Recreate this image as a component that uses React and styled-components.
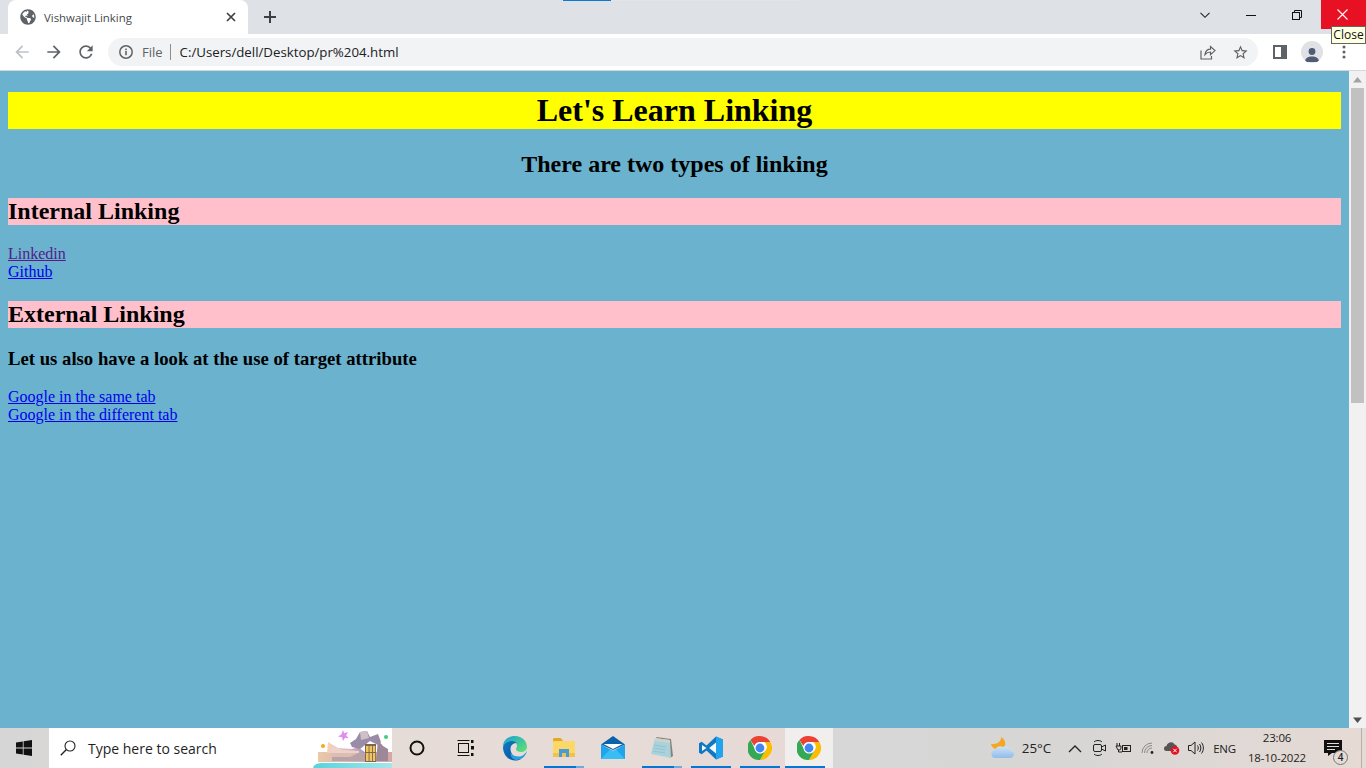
import styled, { createGlobalStyle } from 'styled-components';
import { FaGlobeAmericas } from 'react-icons/fa';

const GlobalStyle = createGlobalStyle`
  html, body {
    margin: 0;
    padding: 0;
    height: 100%;
    overflow: hidden;
  }
`;

const uiFont = `'Open Sans', 'Noto Sans', sans-serif`;

const Screen = styled.div`
  position: relative;
  display: flex;
  flex-direction: column;
  width: 1366px;
  height: 768px;
  overflow: hidden;
  font-family: ${uiFont};
`;

/* ---- browser frame ---- */

const TabStrip = styled.div`
  display: flex;
  align-items: flex-start;
  height: 34px;
  background: #dee1e6;
`;

const Tab = styled.div`
  display: flex;
  align-items: center;
  width: 240px;
  height: 34px;
  margin-left: 8px;
  padding: 0 12px;
  box-sizing: border-box;
  background: #fff;
  border-radius: 8px 8px 0 0;
  color: #5f6368;
`;

const TabTitle = styled.span`
  flex: 1;
  margin-left: 8px;
  font-size: 11.4px;
  color: #45494e;
`;

const PlusButton = styled.div`
  display: flex;
  align-items: center;
  justify-content: center;
  width: 28px;
  height: 34px;
  margin-left: 8px;
`;

const TabSearch = styled.div`
  display: flex;
  align-items: center;
  justify-content: center;
  width: 28px;
  height: 29px;
  margin-left: auto;
  margin-right: 10px;
`;

const WindowButton = styled.div`
  display: flex;
  align-items: center;
  justify-content: center;
  width: ${(p) => p.$w || 46}px;
  height: 29px;
  padding-right: 2px;
  box-sizing: border-box;
  background: ${(p) => (p.$danger ? '#e81123' : 'transparent')};
`;

const Toolbar = styled.div`
  display: flex;
  align-items: center;
  height: 36px;
  background: #fff;
  border-bottom: 1px solid #d5d7da;
  box-sizing: content-box;
`;

const NavButton = styled.div`
  display: flex;
  align-items: center;
  justify-content: center;
  flex: none;
  width: 32px;
  height: 32px;
  margin-left: ${(p) => p.$ml || 0}px;
  color: ${(p) => p.$color || '#5f6368'};
`;

const Omnibox = styled.div`
  display: flex;
  align-items: center;
  width: 1150px;
  height: 28px;
  margin-left: 6px;
  padding: 0 2px 0 10px;
  box-sizing: border-box;
  background: #f1f3f4;
  border-radius: 14px;
`;

const FileLabel = styled.span`
  margin-left: 8px;
  padding-right: 7px;
  border-right: 1px solid #8a8d91;
  font-size: 13px;
  line-height: 16px;
  color: #5f6368;
`;

const Url = styled.span`
  flex: 1;
  margin-left: 9px;
  font-size: 13.25px;
  color: #202124;
`;

const OmniIcon = styled.div`
  display: flex;
  align-items: center;
  justify-content: center;
  width: 32px;
  height: 28px;
`;

const Avatar = styled.div`
  display: flex;
  align-items: flex-end;
  justify-content: center;
  width: 22px;
  height: 22px;
  border-radius: 50%;
  background: #dfe1e5;
  overflow: hidden;
`;

const Tooltip = styled.div`
  position: absolute;
  top: 26px;
  left: 1331px;
  width: 35px;
  height: 18px;
  box-sizing: border-box;
  background: #ffffe1;
  border: 1px solid #646464;
  font-size: 12px;
  line-height: 16px;
  text-align: center;
  color: #111;
`;

const EdgeSliver = styled.div`
  position: absolute;
  top: 0;
  left: 563px;
  display: flex;
  height: 1px;

  &::before {
    content: '';
    width: 48px;
    background: #0a7ad9;
  }

  &::after {
    content: '';
    width: 192px;
    background: #e4e4e4;
  }
`;

/* ---- the page itself ---- */

const Viewport = styled.div`
  display: flex;
  flex: 1;
  min-height: 0;
`;

const Page = styled.main`
  flex: 1;
  padding: 0 8px;
  overflow: hidden;
  background: #6bb2ce;
  font-family: 'Liberation Serif', 'Times New Roman', serif;
  font-size: 16px;
  color: #000;
`;

const Title = styled.h1`
  margin: 21.44px 0;
  font-size: 32px;
  text-align: center;
  background: yellow;
`;

const Subtitle = styled.h2`
  margin: 19.92px 0;
  font-size: 24px;
  text-align: center;
`;

const Section = styled.h2`
  margin: 19.92px 0;
  font-size: 24px;
  background: pink;
`;

const Note = styled.h3`
  margin: 18.72px 0;
  font-size: 18.72px;
`;

const PageLink = styled.a`
  color: ${(p) => (p.$visited ? '#551a8b' : '#0000ee')};
  text-decoration: underline;
`;

const Scrollbar = styled.div`
  display: flex;
  flex-direction: column;
  align-items: center;
  width: 17px;
  background: #f1f1f1;
`;

const ScrollArrow = styled.div`
  display: flex;
  align-items: center;
  justify-content: center;
  width: 17px;
  height: 17px;
`;

const ScrollThumb = styled.div`
  width: 13px;
  height: 315px;
  background: #c1c1c1;
`;

const ScrollTrack = styled.div`
  flex: 1;
`;

/* ---- windows taskbar ---- */

const Taskbar = styled.footer`
  display: flex;
  align-items: stretch;
  height: 40px;
  background: linear-gradient(90deg, #d6d6d6 0, #e6dcd7 28%, #e7dad6 60%, #d7d7d7 61%, #d7d6d5 78%, #e6dad4 100%);
`;

const StartButton = styled.div`
  display: flex;
  align-items: center;
  justify-content: center;
  width: 49px;
  padding-right: 1px;
  box-sizing: border-box;
`;

const SearchBox = styled.div`
  display: flex;
  align-items: center;
  width: 343px;
  padding-left: 11px;
  box-sizing: border-box;
  background: #fff;
`;

const SearchText = styled.span`
  margin-left: 12px;
  font-size: 14px;
  color: #1f1f1f;
`;

const SearchArt = styled.div`
  display: flex;
  align-self: flex-end;
  margin-left: auto;
`;

const TaskItem = styled.div`
  position: relative;
  display: flex;
  align-items: center;
  justify-content: center;
  width: ${(p) => (p.$active ? 48 : 49)}px;
  margin-left: ${(p) => (p.$active ? 1 : 0)}px;
  background: ${(p) => (p.$active ? '#f1efee' : 'transparent')};

  &::after {
    content: '';
    display: ${(p) => (p.$running ? 'block' : 'none')};
    position: absolute;
    left: ${(p) => (p.$active ? 0 : 5)}px;
    bottom: 0;
    width: 40px;
    height: 2px;
    background: ${(p) =>
      p.$stacked
        ? 'linear-gradient(90deg, #0078d7 0, #0078d7 80%, #6aaee0 80%)'
        : '#0078d7'};
  }
`;

const Tray = styled.div`
  display: flex;
  align-items: stretch;
  margin-left: auto;
`;

const TrayCell = styled.div`
  display: flex;
  align-items: center;
  justify-content: center;
  width: ${(p) => p.$w}px;
  box-sizing: border-box;
  font-size: 12px;
  color: #222;
`;

const Temperature = styled(TrayCell)`
  padding-right: 4px;
  font-size: 13.4px;
`;

const Language = styled(TrayCell)`
  font-size: 11.5px;
  letter-spacing: -0.3px;
`;

const Clock = styled.div`
  display: flex;
  flex-direction: column;
  align-items: center;
  justify-content: center;
  width: 72px;
  font-size: 11.5px;
  line-height: 20px;
  letter-spacing: -0.2px;
  color: #222;
`;

const NotifyCell = styled.div`
  position: relative;
  display: flex;
  align-items: center;
  justify-content: center;
  width: 48px;
  padding-right: 8px;
  box-sizing: border-box;
`;

const NotifyBadge = styled.span`
  position: absolute;
  top: 22px;
  left: 20px;
  width: 13px;
  height: 13px;
  border: 1px solid #777;
  border-radius: 50%;
  background: #e6dcd6;
  font-size: 10px;
  font-weight: 600;
  line-height: 13px;
  text-align: center;
  color: #222;
`;

const DesktopPeek = styled.div`
  width: 5px;
  box-sizing: border-box;
  border-left: 1px solid #b5b0ad;
`;

/* ---- drawn icons ---- */

function Arrow({ flip }) {
  return (
    <svg width="20" height="20" viewBox="0 0 24 24" fill="currentColor" style={flip ? { transform: 'scaleX(-1)' } : undefined}>
      <path d="M20 11H7.83l5.59-5.59L12 4l-8 8 8 8 1.41-1.41L7.83 13H20v-2z" />
    </svg>
  );
}

function Reload() {
  return (
    <svg width="20" height="20" viewBox="0 0 24 24" fill="#5f6368">
      <path d="M17.65 6.35C16.2 4.9 14.21 4 12 4c-4.42 0-7.99 3.58-7.99 8s3.57 8 7.99 8c3.73 0 6.84-2.55 7.73-6h-2.08c-.82 2.33-3.04 4-5.65 4-3.31 0-6-2.69-6-6s2.69-6 6-6c1.66 0 3.14.69 4.22 1.78L13 11h7V4l-2.35 2.35z" />
    </svg>
  );
}

function InfoIcon() {
  return (
    <svg width="16" height="16" viewBox="0 0 16 16" fill="none">
      <circle cx="8" cy="8" r="6.2" stroke="#5f6368" strokeWidth="1.5" />
      <rect x="7.2" y="7" width="1.6" height="4.2" fill="#5f6368" />
      <rect x="7.2" y="4.6" width="1.6" height="1.6" fill="#5f6368" />
    </svg>
  );
}

function ShareIcon() {
  return (
    <svg width="16" height="16" viewBox="0 0 16 16" fill="none" stroke="#5f6368" strokeWidth="1.2">
      <path d="M1 6.5v8.5h10.5v-3" />
      <path d="M5 10.5C5.5 7 8 5.2 10.5 5.2V2.6L15 6.6l-4.5 4V8C8.5 8 6.5 8.8 5 10.5z" />
    </svg>
  );
}

function StarIcon() {
  return (
    <svg width="17" height="17" viewBox="0 0 24 24" fill="#5f6368">
      <path d="M22 9.24l-7.19-.62L12 2 9.19 8.63 2 9.24l5.46 4.73L5.82 21 12 17.27 18.18 21l-1.63-7.03L22 9.24zM12 15.4l-3.76 2.27 1-4.28-3.32-2.88 4.38-.38L12 6.1l1.71 4.04 4.38.38-3.32 2.88 1 4.28L12 15.4z" />
    </svg>
  );
}

function SidePanelIcon() {
  return (
    <svg width="14" height="14" viewBox="0 0 14 14">
      <path fillRule="evenodd" fill="#5f6368" d="M0 0h14v14H0zM2 2v10h6V2z" />
    </svg>
  );
}

function WindowsLogo() {
  return (
    <svg width="16" height="16" viewBox="0 0 16 16" fill="#111">
      <path d="M0 2.4l6.8-1v6.2H0zM7.6 1.3L16 0v7.6H7.6zM0 8.4h6.8v6.2L0 13.6zM7.6 8.4H16V16l-8.4-1.2z" />
    </svg>
  );
}

function SearchGlass() {
  return (
    <svg width="16" height="16" viewBox="0 0 16 16" fill="none" stroke="#222" strokeWidth="1.1">
      <circle cx="10" cy="6" r="5" />
      <path d="M6.4 9.6L.8 15.2" strokeWidth="1.4" />
    </svg>
  );
}

function BuildingArt() {
  return (
    <svg width="80" height="40" viewBox="0 0 80 40">
      <defs>
        <linearGradient id="artWing" x1="0" y1="0" x2="1" y2="0">
          <stop offset="0" stopColor="#f6d3b4" />
          <stop offset="0.5" stopColor="#e2b8c4" />
          <stop offset="1" stopColor="#a795b8" />
        </linearGradient>
        <linearGradient id="artBase" x1="0" y1="0" x2="1" y2="0">
          <stop offset="0" stopColor="#eac8a8" />
          <stop offset="0.6" stopColor="#d3aeb2" />
          <stop offset="1" stopColor="#d6a6a6" />
        </linearGradient>
        <linearGradient id="artWater" x1="0" y1="0" x2="1" y2="0">
          <stop offset="0" stopColor="#55d5dc" />
          <stop offset="1" stopColor="#a4e6ea" />
        </linearGradient>
      </defs>
      <path d="M1 40c1-4 5-5 10-5h69v5z" fill="url(#artWater)" />
      <rect x="6" y="24" width="74" height="10" fill="url(#artBase)" />
      <path d="M15 25l1-11 10 6 14 1 6-2 8 6z" fill="url(#artWing)" />
      <path d="M19 25V18l12 4 16 1v2z" fill="#ecd2c8" />
      <path d="M20 25h32l4 8H20z" fill="#b8a3a6" />
      <path d="M20 25h26l-8 4H20z" fill="#dcbdb4" />
      <path d="M38 15l6-4 4-7 7-1 3 6 8-3 3 8-3 3-8-4-10 8-8-2z" fill="#9a8ba6" />
      <path d="M48 4l7-1 2 7-8 2z" fill="#cfc0c8" />
      <path d="M66 12l5 6 5 3v12H64z" fill="#9c8896" />
      <rect x="53" y="16" width="11" height="18" fill="#7d6455" />
      <path d="M54 18h2.6v6H54zM57.500 18h2.600v6h-2.600zM61 18h2.200v6H61zM54 25h2.600v8H54zM57.500 25h2.600v8h-2.600zM61 25h2.200v8H61z" fill="#f2c65a" />
      <path d="M31 2l1.200 3.300L36 4l-1.800 3.400 2.600 2.800-3.800-.4L31 13l-1-3.800L26 8.600l3.400-2z" fill="#e58af0" />
      <circle cx="11" cy="18" r="2" fill="#f6a623" />
      <circle cx="74" cy="9" r="2" fill="#3fcf7a" />
    </svg>
  );
}

function CortanaRing() {
  return (
    <svg width="18" height="18" viewBox="0 0 18 18" fill="none">
      <circle cx="9" cy="9" r="6.5" stroke="#111" strokeWidth="2" />
    </svg>
  );
}

function TaskViewIcon() {
  return (
    <svg width="18" height="18" viewBox="0 0 18 18" fill="none" stroke="#111" strokeWidth="1">
      <path d="M.5 1.5h12M.5 16.5h12" />
      <rect x="1.5" y="4.5" width="10" height="9" />
      <rect x="14" y="1" width="2.5" height="3" fill="#111" stroke="none" />
      <rect x="14" y="7" width="3" height="3.5" fill="#111" stroke="none" />
      <rect x="14" y="14" width="2.5" height="3" fill="#111" stroke="none" />
    </svg>
  );
}

function EdgeIcon() {
  return (
    <svg width="26" height="26" viewBox="0 0 26 26">
      <defs>
        <linearGradient id="edgeGreen" x1="0" y1="0" x2="1" y2="1">
          <stop offset="0" stopColor="#1ba1d8" />
          <stop offset="1" stopColor="#62e46b" />
        </linearGradient>
        <linearGradient id="edgeBlue" x1="0" y1="0" x2="1" y2="1">
          <stop offset="0" stopColor="#0f7bc4" />
          <stop offset="1" stopColor="#0a4d9c" />
        </linearGradient>
      </defs>
      <path d="M1 12C1 5 6.5 1 13 1c7 0 12 5 12 11 0 3.5-3 5-6 5-2.5 0-5-1-5-3 0-1 1-1.5 1-3 0-2.5-2.5-4-5-4-4 0-8 2-9 5z" fill="url(#edgeGreen)" />
      <path d="M1 12c1-4 5-6 9-6 1.8 0 3.5.7 4.5 2-3.5 0-6 2.5-6 6 0 5 4 9.5 10.5 10-1.8 1-3.8 1.5-6 1.5C6 25.5 1 19.5 1 12z" fill="url(#edgeBlue)" />
      <path d="M25 16c-1 5-5.5 9-10.5 9-3 0-6-2.5-6-7 2 2.5 5 3.5 8.5 3.5 3 0 6-2 8-5.5z" fill="#2a9fdc" />
    </svg>
  );
}

function FolderIcon() {
  return (
    <svg width="22" height="20" viewBox="0 0 22 20">
      <path d="M0 1.5C0 .7.7 0 1.5 0h6L10 2.5v2H0z" fill="#e5a823" />
      <rect y="3" width="22" height="15.5" rx="1" fill="#fcd869" />
      <rect y="15" width="22" height="4" fill="#f2c24b" />
      <path d="M6 11h10v8h-3v-4H9v4H6z" fill="#4a9ad8" />
    </svg>
  );
}

function MailIcon() {
  return (
    <svg width="24" height="24" viewBox="0 0 24 24">
      <path d="M0 8.5L12 0l12 8.5L12 14z" fill="#0a62ab" />
      <path d="M2.5 8L12 8 21.5 8 12 13z" fill="#fff" />
      <path d="M0 8.5l12 6.5 12-6.5V23H0z" fill="#1ea5ec" />
      <path d="M0 23l9-9.5 3 1.5 3-1.5L24 23z" fill="#38bdf4" />
    </svg>
  );
}

function NotepadIcon() {
  return (
    <svg width="24" height="24" viewBox="0 0 24 24">
      <path d="M6 1l15 2 2 17-3 2z" fill="#8a8077" />
      <path d="M5 2l15 2 1 18L1 18z" fill="#a9d3dc" />
      <path d="M5 2l15 2v3L4.2 5z" fill="#cfd2cc" />
      <path d="M4 9l12 2M3.5 12l12 2M3 15l12 2" stroke="#8fbac5" strokeWidth=".7" />
    </svg>
  );
}

function VsCodeIcon() {
  return (
    <svg width="24" height="24" viewBox="0 0 24 24">
      <path d="M17 .5L24 3.5v17L17 23.5 7.5 14.5l-4.8 3.7L0 16.700V7.300l2.700-1.500L7.500 9.500z" fill="#0e78c2" />
      <path d="M17 .5l7 3v17l-7 3z" fill="#22a3ee" />
      <path d="M17 6.5L10.2 12 17 17.5z" fill="#fff" opacity="0.95" />
      <path d="M3 9l4.5 3L3 15z" fill="#fff" opacity="0.95" />
    </svg>
  );
}

function ChromeIcon() {
  return (
    <svg width="24" height="24" viewBox="0 0 48 48">
      <circle cx="24" cy="24" r="24" fill="#fff" />
      <path d="M24 0a24 24 0 0 1 20.8 12H24a12 12 0 0 0-11.4 8.2L5 7.8A24 24 0 0 1 24 0z" fill="#ea4335" />
      <path d="M44.8 12A24 24 0 0 1 24 48l10.4-18a12 12 0 0 0-1.8-18z" fill="#fbbc04" />
      <path d="M24 48A24 24 0 0 1 5 7.8L15.6 30A12 12 0 0 0 34.4 30z" fill="#34a853" />
      <circle cx="24" cy="24" r="11" fill="#fff" />
      <circle cx="24" cy="24" r="8.8" fill="#4285f4" />
    </svg>
  );
}

function WeatherIcon() {
  return (
    <svg width="24" height="22" viewBox="0 0 24 22">
      <defs>
        <linearGradient id="cloudFill" x1="0" y1="0" x2="0" y2="1">
          <stop offset="0" stopColor="#cfe2f6" />
          <stop offset="1" stopColor="#8fbdea" />
        </linearGradient>
      </defs>
      <path d="M11 0c.5 4-3 7.500-10 7 1 4 6 7 11 5 5-2.500 4-9.500-1-12z" fill="#f5a623" />
      <path d="M6 21a4 4 0 0 1-1-8c1-3 5-5 8-3 3-2 7 0 7 4 3 0 4 2 4 3.500S22 21 20 21z" fill="url(#cloudFill)" />
    </svg>
  );
}

function Chevron() {
  return (
    <svg width="12" height="12" viewBox="0 0 12 12" fill="none" stroke="#222" strokeWidth="1.1">
      <path d="M1.5 3.8L6 8.300l4.500-4.500" />
    </svg>
  );
}

function App() {
  return (
    <Screen>
      <GlobalStyle />
      <TabStrip>
        <Tab>
          <FaGlobeAmericas size={16} color="#5f6368" />
          <TabTitle>Vishwajit Linking</TabTitle>
          <svg width="10" height="10" viewBox="0 0 10 10" stroke="#3c4043" strokeWidth="1.7">
            <path d="M1 1l8 8M9 1L1 9" />
          </svg>
        </Tab>
        <PlusButton>
          <svg width="14" height="14" viewBox="0 0 14 14" stroke="#3c4043" strokeWidth="2">
            <path d="M7 1v12M1 7h12" />
          </svg>
        </PlusButton>
        <TabSearch>
          <Chevron />
        </TabSearch>
        <WindowButton>
          <svg width="10" height="10" viewBox="0 0 10 10" stroke="#111">
            <path d="M0 5.5h10" />
          </svg>
        </WindowButton>
        <WindowButton>
          <svg width="10" height="10" viewBox="0 0 10 10" fill="none" stroke="#111">
            <rect x=".5" y="2.5" width="7" height="7" />
            <path d="M2.5 2.5v-2h7v7h-2" />
          </svg>
        </WindowButton>
        <WindowButton $danger $w={45}>
          <svg width="11" height="11" viewBox="0 0 11 11" stroke="#fff" strokeWidth="1.1">
            <path d="M.5.5l10 10M10.5.5l-10 10" />
          </svg>
        </WindowButton>
      </TabStrip>

      <Toolbar>
        <NavButton $ml={6} $color="#bdc1c6"><Arrow /></NavButton>
        <NavButton $color="#5f6368"><Arrow flip /></NavButton>
        <NavButton><Reload /></NavButton>
        <Omnibox>
          <InfoIcon />
          <FileLabel>File</FileLabel>
          <Url>C:/Users/dell/Desktop/pr%204.html</Url>
          <OmniIcon><ShareIcon /></OmniIcon>
          <OmniIcon><StarIcon /></OmniIcon>
        </Omnibox>
        <NavButton $ml={6}><SidePanelIcon /></NavButton>
        <NavButton>
          <Avatar>
            <svg width="14" height="16" viewBox="0 0 14 16" fill="#4d5b73">
              <circle cx="7" cy="4.5" r="3.4" />
              <path d="M0 15c0-4 3-5.5 7-5.5S14 11 14 15z" />
            </svg>
          </Avatar>
        </NavButton>
        <NavButton>
          <svg width="4" height="14" viewBox="0 0 4 14" fill="#5f6368">
            <circle cx="2" cy="2" r="1.5" />
            <circle cx="2" cy="7" r="1.5" />
            <circle cx="2" cy="12" r="1.5" />
          </svg>
        </NavButton>
      </Toolbar>

      <Viewport>
        <Page>
          <Title>Let's Learn Linking</Title>
          <Subtitle>There are two types of linking</Subtitle>
          <Section>Internal Linking</Section>
          <div>
            <PageLink href="#" $visited>Linkedin</PageLink>
            <br />
            <PageLink href="#">Github</PageLink>
          </div>
          <Section>External Linking</Section>
          <Note>Let us also have a look at the use of target attribute</Note>
          <div>
            <PageLink href="#">Google in the same tab</PageLink>
            <br />
            <PageLink href="#">Google in the different tab</PageLink>
          </div>
        </Page>
        <Scrollbar>
          <ScrollArrow>
            <svg width="9" height="6" viewBox="0 0 9 6" fill="#a3a3a3"><path d="M4.5 0L9 5.5H0z" /></svg>
          </ScrollArrow>
          <ScrollThumb />
          <ScrollTrack />
          <ScrollArrow>
            <svg width="9" height="6" viewBox="0 0 9 6" fill="#505050"><path d="M4.5 6L9 .5H0z" /></svg>
          </ScrollArrow>
        </Scrollbar>
      </Viewport>

      <Taskbar>
        <StartButton><WindowsLogo /></StartButton>
        <SearchBox>
          <SearchGlass />
          <SearchText>Type here to search</SearchText>
          <SearchArt><BuildingArt /></SearchArt>
        </SearchBox>
        <TaskItem><CortanaRing /></TaskItem>
        <TaskItem><TaskViewIcon /></TaskItem>
        <TaskItem><EdgeIcon /></TaskItem>
        <TaskItem $running $stacked><FolderIcon /></TaskItem>
        <TaskItem><MailIcon /></TaskItem>
        <TaskItem $running $stacked><NotepadIcon /></TaskItem>
        <TaskItem $running><VsCodeIcon /></TaskItem>
        <TaskItem $running><ChromeIcon /></TaskItem>
        <TaskItem $running $active><ChromeIcon /></TaskItem>
        <Tray>
          <TrayCell $w={24}><WeatherIcon /></TrayCell>
          <Temperature $w={49}>25°C</Temperature>
          <TrayCell $w={24}>
            <svg width="14" height="9" viewBox="0 0 14 9" fill="none" stroke="#222" strokeWidth="1.3"><path d="M1 8l6-6 6 6" /></svg>
          </TrayCell>
          <TrayCell $w={24}>
            <svg width="14" height="18" viewBox="0 0 14 18" fill="none" stroke="#222">
              <path d="M2 3c2-2 6-2 8 0M2 15c2 2 6 2 8 0" />
              <rect x="1.5" y="5.5" width="8" height="7" rx="1.5" />
              <path d="M9.5 8l4-2v6l-4-2" />
            </svg>
          </TrayCell>
          <TrayCell $w={24}>
            <svg width="16" height="12" viewBox="0 0 16 12" fill="none" stroke="#222">
              <path d="M2 1v3M4.5 1v3M1 4h5v2a2 2 0 0 1-4 0zM3.5 8v2H7" />
              <rect x="7.5" y="3.5" width="8" height="6" />
              <rect x="9" y="5" width="3.5" height="3" fill="#222" stroke="none" />
            </svg>
          </TrayCell>
          <TrayCell $w={25}>
            <svg width="14" height="12" viewBox="0 0 14 12" fill="none" stroke="#8a8a8a">
              <path d="M1 11a10 10 0 0 1 10-10M3.5 11A7.5 7.5 0 0 1 11 3.5M6 11a5 5 0 0 1 5-5" />
              <circle cx="11" cy="10.5" r="1.4" fill="#222" stroke="none" />
            </svg>
          </TrayCell>
          <TrayCell $w={24}>
            <svg width="16" height="14" viewBox="0 0 16 14">
              <path d="M2.5 10a2.5 2.5 0 0 1 0-5C3.5 1 9 0 10.5 3.5c1.5 0 2.5 1 2.5 2.500v4z" fill="#555" />
              <circle cx="11" cy="9.5" r="4.3" fill="#e81123" />
              <path d="M9.3 7.8l3.4 3.4M12.7 7.8l-3.4 3.4" stroke="#fff" strokeWidth="1" />
            </svg>
          </TrayCell>
          <TrayCell $w={24}>
            <svg width="16" height="14" viewBox="0 0 16 14" fill="none" stroke="#222">
              <path d="M.5 4.5h2.5L7 1v12L3 9.5H.5z" />
              <path d="M9.5 4.5c1 1.500 1 3.500 0 5M11.500 3c1.800 2.300 1.800 5.700 0 8M13.500 1.500c2.500 3.300 2.500 7.700 0 11" />
            </svg>
          </TrayCell>
          <Language $w={33}>ENG</Language>
          <Clock>
            <span>23:06</span>
            <span>18-10-2022</span>
          </Clock>
          <NotifyCell>
            <svg width="18" height="16" viewBox="0 0 18 16">
              <path d="M0 0h18v13H8l-4 3v-3H0z" fill="#111" />
              <path d="M3 3.5h12M3 6.5h12M3 9.5h8" stroke="#e6dcd6" />
            </svg>
            <NotifyBadge>4</NotifyBadge>
          </NotifyCell>
          <DesktopPeek />
        </Tray>
      </Taskbar>

      <EdgeSliver />
      <Tooltip>Close</Tooltip>
    </Screen>
  );
}

export default App;
